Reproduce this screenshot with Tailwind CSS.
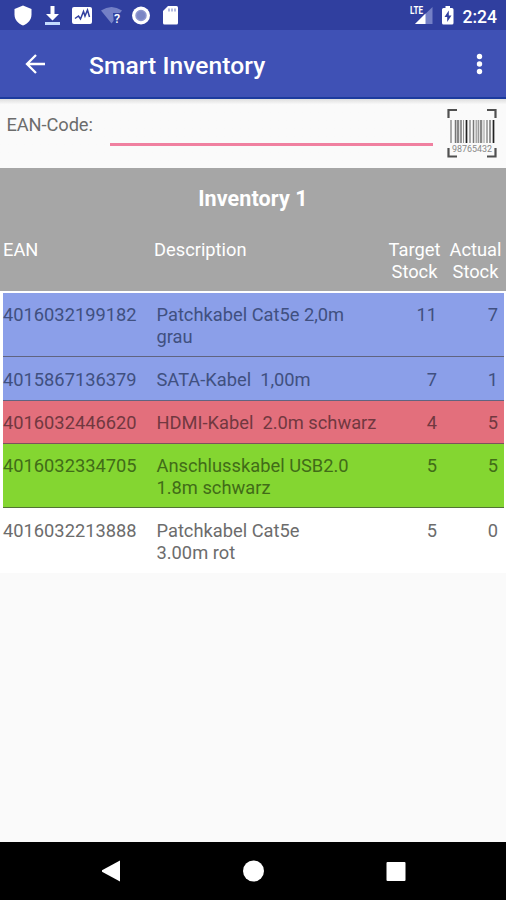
<!DOCTYPE html>
<html lang="en">
<head>
<meta charset="utf-8">
<title>Smart Inventory</title>
<script src="https://cdn.jsdelivr.net/npm/@tailwindcss/browser@4"></script>
</head>
<body class="w-[506px] h-[900px] overflow-hidden bg-[#fafafa] flex flex-col font-[Roboto,sans-serif] text-[18.3px] leading-[21.5px] text-[#6c6c6c]">
<div class="h-[30px] shrink-0 bg-[#303f9f] text-white flex">
  <svg class="w-[200px] h-[30px]" viewBox="0 0 200 30" fill="#fff">
    <path d="M23 5.500L31.500 9V14.500C31.500 20 28 23.500 23 25.500C18 23.500 14.500 20 14.500 14.500V9Z"/>
    <path d="M50.500 6h4v8h4.500l-6.500 6.500L46 14h4.500z"/><path d="M45 22h15v3H45z" fill="#c5dcff"/>
    <rect x="72" y="7" width="20" height="17" rx="2"/>
    <path d="M75 18.500L78.500 16L80.500 19L83.500 11.500L85 16L87.500 10L89.500 17" fill="none" stroke="#303f9f" stroke-width="1.500"/>
    <path d="M101 10.500Q111.500 3.500 122 10.500L111.500 23.500Z" fill="#7480c6"/>
    <path d="M113 13h8v11h-7z" fill="#303f9f"/>
    <text x="114" y="23" font-size="12.500" font-weight="500">?</text>
    <circle cx="141" cy="15.500" r="9"/><circle cx="141" cy="15.500" r="5" fill="#7b86c5" stroke="#8c96ce" stroke-width="1.500"/>
    <path d="M168 6h8.500q1.500 0 1.500 1.500V23q0 1.500-1.500 1.500H164.500Q163 24.500 163 23V11z"/>
    <path d="M169 8.500v3M172 8.500v3M175 8.500v3" stroke="#8c96ce" stroke-width="1.300"/>
  </svg>
  <svg class="ml-auto w-[106px] h-[30px]" viewBox="0 0 106 30" fill="#fff">
    <path d="M32.500 7v17H15z" fill="#7480c6"/><path d="M25.500 13.500V24H15z"/>
    <path d="M9 5h14.500v10H9z" fill="#303f9f"/>
    <text x="10" y="14.300" font-size="10" font-weight="700" textLength="13" lengthAdjust="spacingAndGlyphs">LTE</text>
    <path d="M45.500 6h4.500v2h2q1.500 0 1.500 1.500V23q0 1.500-1.500 1.500h-8.500Q42 24.500 42 23V9.500Q42 8 43.500 8h2z"/>
    <path d="M48.800 10.500L44.500 17h2.700v5l4.300-6.500h-2.700z" fill="#303f9f"/>
    <text x="62.500" y="22.500" font-size="18" font-weight="500" textLength="34.500" lengthAdjust="spacingAndGlyphs">2:24</text>
  </svg>
</div>
<div class="h-[69px] shrink-0 bg-[#3f51b5] border-b-2 border-[#1c3b9e] text-white flex items-center">
  <svg class="ml-[25px] mt-px w-[21px] h-[22px]" viewBox="0 0 21 22" fill="none" stroke="#fff" stroke-width="2.300"><path d="M20 11H2.500M11 2L2 11l9 9"/></svg>
  <h1 class="ml-[43px] pt-[4px] text-[24.6px] leading-[30px] tracking-[.05px] font-medium whitespace-nowrap">Smart Inventory</h1>
  <svg class="ml-auto mr-[22px] mt-px w-[9px] h-[22px]" viewBox="0 0 9 22" fill="#fff"><circle cx="4.500" cy="3.500" r="2.700"/><circle cx="4.500" cy="11" r="2.700"/><circle cx="4.500" cy="18.500" r="2.700"/></svg>
</div>
<div class="h-[69px] shrink-0 flex bg-gradient-to-b from-[#dedede] from-0% to-[#fafafa] to-8%">
  <label class="w-[110px] pl-[6.500px] pt-[15px] tracking-[-.1px]">EAN-Code:</label>
  <div class="w-[323px] h-[47px] border-b-[3px] border-[#f080a0]"></div>
  <svg class="ml-[14px] mt-[9px] w-[51px] h-[51px]" viewBox="0 0 51 51">
    <path d="M1.500 10V2H10M40 2H48.500V10M1.500 40V48.500H10M40 48.500H48.500V40" fill="none" stroke="#505050" stroke-width="2.200"/>
    <g fill="none">
      <path d="M4 12v23M23 12v23M29.500 12v23M40 12v23" stroke="#aaa" stroke-width="2"/>
      <path d="M8.500 12v23M14 12v23M26.500 12v23M43 12v23" stroke="#777" stroke-width="1.500"/>
      <path d="M11 12v23M34 12v23" stroke="#888" stroke-width="2.500"/>
      <path d="M19.500 12v23M46.500 12v23" stroke="#222" stroke-width="1.700"/>
      <path d="M16.500 12v23M31.500 12v23M37 12v23" stroke="#999" stroke-width="1"/>
    </g>
    <text x="5" y="44" font-size="9" fill="#888" textLength="40" lengthAdjust="spacingAndGlyphs">98765432</text>
  </svg>
</div>
<div class="h-[123px] shrink-0 bg-[#a6a6a6] text-white">
  <h2 class="h-[71px] pt-[18px] text-center text-[21.5px] leading-[26px] tracking-[.1px] font-bold">Inventory 1</h2>
  <div class="flex pl-[3px]">
    <span class="w-[151px]">EAN</span><span class="flex-1">Description</span>
    <span class="w-[61px] text-center">Target<br>Stock</span><span class="w-[61px] text-center">Actual<br>Stock</span>
  </div>
</div>
<div class="shrink-0 bg-white pt-[2px] pl-[3px] pr-[2px]">
  <div class="h-[64px] bg-[#8b9fe9] text-[#405080] border-b border-[#606480] flex pt-[11px]"><span class="w-[153.500px]">4016032199182</span><span class="w-[219.500px]">Patchkabel Cat5e 2,0m<br>grau</span><span class="w-[61px] text-right">11</span><span class="w-[61px] text-right">7</span></div>
  <div class="h-[44px] bg-[#8b9fe9] text-[#405080] border-b border-[#606480] flex pt-[12px]"><span class="w-[153.500px]">4015867136379</span><span class="w-[219.500px] whitespace-pre">SATA-Kabel  1,00m</span><span class="w-[61px] text-right">7</span><span class="w-[61px] text-right">1</span></div>
  <div class="h-[43px] bg-[#e36f7c] text-[#713840] border-b border-[#7d515c] flex pt-[11px]"><span class="w-[153.500px]">4016032446620</span><span class="w-[219.500px] whitespace-pre">HDMI-Kabel  2.0m schwarz</span><span class="w-[61px] text-right">4</span><span class="w-[61px] text-right">5</span></div>
  <div class="h-[64px] bg-[#84d631] text-[#416c18] border-b border-[#527335] flex pt-[11px]"><span class="w-[153.500px]">4016032334705</span><span class="w-[219.500px]">Anschlusskabel USB2.0<br>1.8m schwarz</span><span class="w-[61px] text-right">5</span><span class="w-[61px] text-right">5</span></div>
  <div class="h-[65px] flex pt-[12px]"><span class="w-[153.500px]">4016032213888</span><span class="w-[219.500px]">Patchkabel Cat5e<br>3.00m rot</span><span class="w-[61px] text-right">5</span><span class="w-[61px] text-right">0</span></div>
</div>
<div class="mt-auto h-[58px] shrink-0 bg-black">
  <svg class="w-[506px] h-[58px]" viewBox="0 0 506 58" fill="#fff"><path d="M102 28.300L120 18.500V39.500L102 29.700Z"/><circle cx="253.500" cy="29" r="10.500"/><rect x="386.500" y="20" width="19" height="19" rx="1"/></svg>
</div>
</body>
</html>
